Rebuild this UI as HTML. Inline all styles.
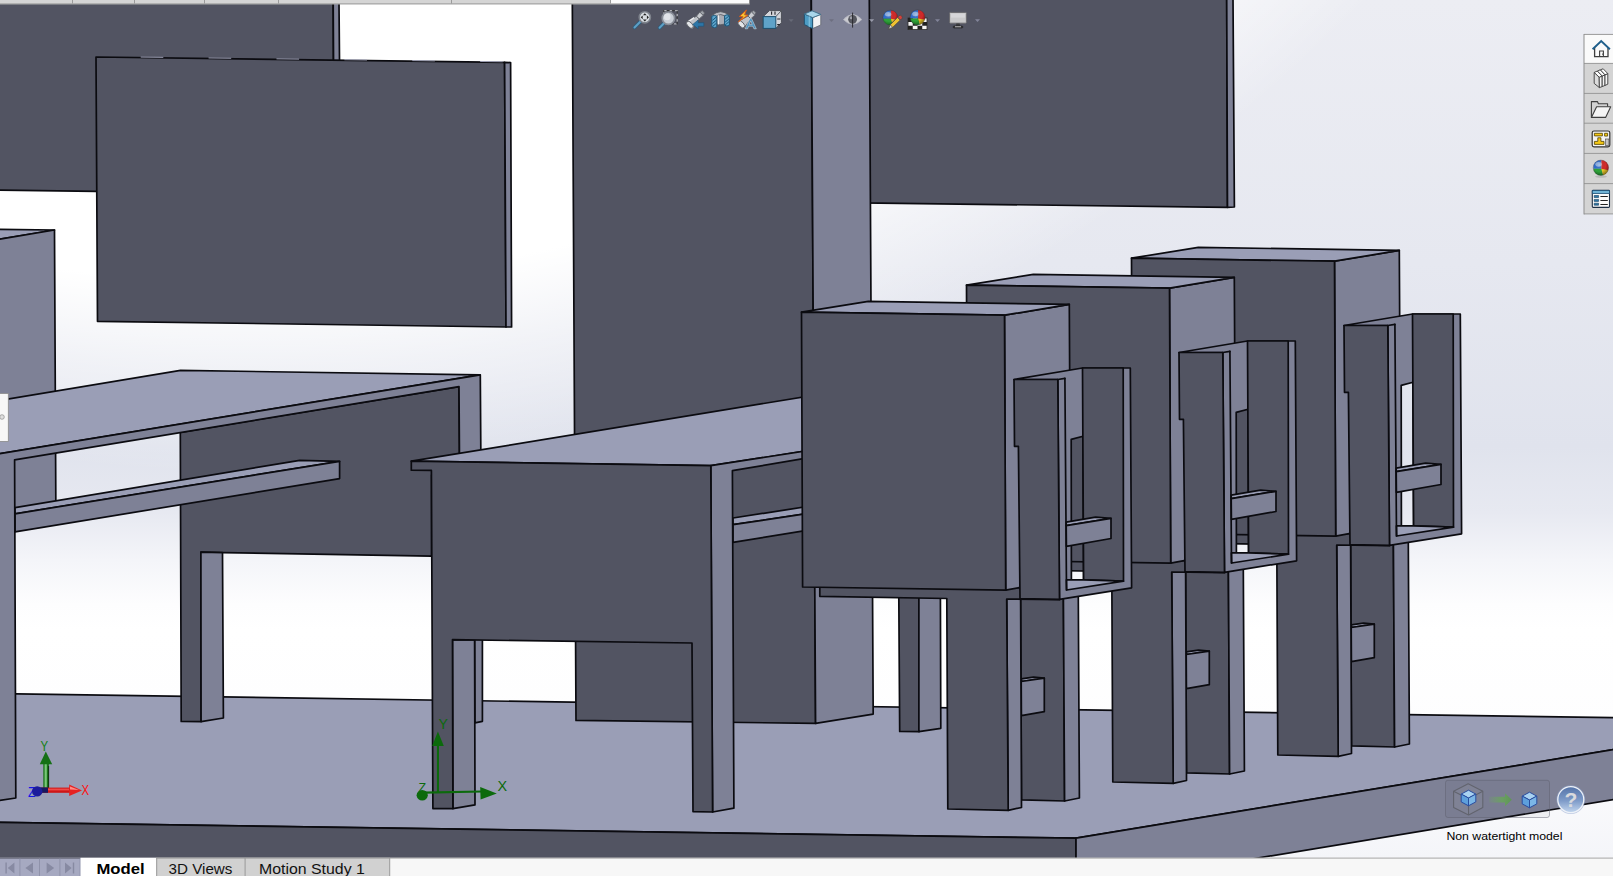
<!DOCTYPE html>
<html lang="en"><head><meta charset="utf-8"><title>Model view</title>
<style>
html,body{margin:0;padding:0;background:#fff;overflow:hidden}
body{width:1613px;height:876px;position:relative;font-family:"Liberation Sans",sans-serif}
svg{position:absolute;left:0;top:0;display:block}
.e{stroke:#0b0b10;stroke-width:1.7;stroke-linejoin:round}
.l{stroke:#0b0b10;stroke-width:1.7;fill:none;stroke-linecap:round}
text{font-family:"Liberation Sans",sans-serif}
</style></head><body>
<svg width="1613" height="876" viewBox="0 0 1613 876">
<defs>
<linearGradient id="bgv" x1="0" y1="0" x2="0" y2="1"><stop offset="0" stop-color="#ecedf3"/><stop offset="0.30" stop-color="#e6e8f0"/><stop offset="0.51" stop-color="#e0e3ed"/><stop offset="0.585" stop-color="#e7e9f1"/><stop offset="0.64" stop-color="#f4f5f9"/><stop offset="0.69" stop-color="#fdfdfe"/><stop offset="0.72" stop-color="#ffffff"/><stop offset="0.86" stop-color="#fdfdfe"/><stop offset="0.98" stop-color="#f4f5f9"/><stop offset="1" stop-color="#f4f5f9"/></linearGradient>
<radialGradient id="bgw" gradientUnits="userSpaceOnUse" cx="250" cy="-1087" r="1564"><stop offset="0" stop-color="#fff" stop-opacity="1"/><stop offset="0.875" stop-color="#fff" stop-opacity="1"/><stop offset="0.931" stop-color="#fff" stop-opacity=".5"/><stop offset="0.998" stop-color="#fff" stop-opacity="0"/><stop offset="1" stop-color="#fff" stop-opacity="0"/></radialGradient>
</defs>
<rect width="1613" height="876" fill="url(#bgv)"/>
<rect width="1613" height="876" fill="url(#bgw)"/>
<g id="scene">
<polygon class="e" points="-2.0,3.0 333.2,3.0 334.0,196.0 96.0,191.3 -2.0,190.2" fill="#525462"/>
<polygon class="e" points="333.2,3.0 339.0,3.0 339.6,70.0 333.6,70.0" fill="#7e8196"/>
<polygon class="e" points="860.0,-2.0 1226.7,-2.0 1227.5,207.3 860.0,202.9" fill="#525462"/>
<polygon class="e" points="1226.7,-2.0 1233.0,-2.0 1234.4,207.0 1227.5,207.3" fill="#7e8196"/>
<polygon class="e" points="-2.0,693.6 1613.0,717.7 1616.0,717.7 1616.0,749.2 1076.0,838.2 -2.0,822.4" fill="#9a9eb6"/>
<polygon class="e" points="-2.0,822.4 1076.0,838.2 1076.0,860.0 -2.0,860.0" fill="#525462"/>
<polygon class="e" points="1076.0,838.2 1616.0,749.2 1616.0,799.1 1246.0,860.0 1076.0,860.0" fill="#7e8196"/>
<polygon class="e" points="572.3,-2.0 811.3,-2.0 815.6,723.4 576.0,720.4" fill="#525462"/>
<polygon class="e" points="811.3,-2.0 869.3,-2.0 873.2,714.1 815.6,723.4" fill="#7e8196"/>
<polygon class="e" points="-2.0,229.4 54.5,230.0 -2.0,239.4" fill="#9a9eb6"/>
<polygon class="e" points="-2.0,239.4 54.5,230.0 55.9,515.0 -2.0,515.0" fill="#7e8196"/>
<polygon class="e" points="96.0,57.0 504.6,62.3 506.0,327.0 97.5,321.3" fill="#525462"/>
<polygon class="e" points="504.6,62.3 510.6,62.6 511.6,327.0 506.0,327.0" fill="#7e8196"/>
<polyline points="96,56.5 504.6,61.8" fill="none" stroke="#a9acc2" stroke-width="0.9" stroke-dasharray="22.6 45.3" stroke-dashoffset="23.2"/>
<polygon class="e" points="180.3,432.3 459.0,386.6 459.6,475.0 431.6,475.0 431.6,556.2 222.5,552.6 200.9,552.2 201.1,721.6 181.2,721.4" fill="#525462"/>
<polygon class="e" points="200.9,552.2 222.5,552.6 223.4,718.0 201.1,721.6" fill="#7e8196"/>
<polygon class="e" points="15.0,507.6 299.7,460.4 339.6,461.4 15.0,513.8" fill="#9a9eb6"/>
<polygon class="e" points="15.0,513.8 339.6,461.4 339.6,478.6 15.0,531.9" fill="#7e8196"/>
<polygon class="e" points="-2.0,400.8 180.5,370.4 479.8,374.8 -2.0,454.0" fill="#9a9eb6"/>
<polygon class="e" points="-2.0,454.0 480.3,374.8 481.0,476.0 459.6,476.0 459.0,386.6 14.6,459.8 15.8,798.0 -2.0,800.8" fill="#7e8196"/>
<polygon class="e" points="474.6,636.0 482.4,636.0 482.4,721.3 474.9,722.8" fill="#7e8196"/>
<polygon class="e" points="411.3,461.2 830.0,392.6 830.0,447.2 710.8,465.7" fill="#9a9eb6"/>
<polygon class="e" points="733.0,518.0 830.0,503.0 830.0,510.2 733.0,524.7" fill="#9a9eb6"/>
<polygon class="e" points="733.0,524.7 830.0,510.2 830.0,526.6 733.0,542.3" fill="#7e8196"/>
<polygon class="e" points="710.8,465.7 830.0,447.2 830.0,454.2 732.4,470.7 733.9,808.2 712.6,812.0" fill="#7e8196"/>
<polygon class="e" points="452.5,639.7 474.6,640.0 475.0,804.9 452.9,808.6" fill="#7e8196"/>
<polygon class="e" points="411.3,461.2 710.8,465.7 712.6,812.0 693.0,811.6 692.0,643.0 452.5,639.7 452.9,808.6 432.9,808.6 431.4,470.4 411.3,470.2" fill="#525462"/>
<polygon class="e" points="898.8,596.0 918.9,596.0 918.9,731.7 899.7,731.4" fill="#525462"/>
<polygon class="e" points="918.9,596.0 940.4,596.0 940.8,728.3 918.9,731.7" fill="#7e8196"/>
<polygon class="e" points="1350.6,542.0 1393.4,542.0 1394.6,747.0 1351.5,745.8" fill="#525462"/>
<polygon class="e" points="1393.4,544.5 1408.3,541.0 1409.4,744.0 1394.6,747.0" fill="#7e8196"/>
<polygon class="e" points="1351.2,624.9 1363.5,623.1 1374.3,624.1 1351.9,627.5" fill="#9a9eb6"/>
<polygon class="e" points="1351.2,627.5 1374.3,624.1 1374.3,657.7 1351.4,661.7" fill="#7e8196"/>
<polygon class="e" points="1336.7,543.0 1350.6,543.0 1351.5,753.5 1338.2,756.3" fill="#7e8196"/>
<polygon class="e" points="1149.8,532.0 1389.7,534.0 1389.7,545.6 1336.7,545.0 1338.2,756.3 1277.8,755.0 1276.8,544.5 1149.8,542.3" fill="#525462"/>
<polygon class="e" points="1334.5,261.2 1399.3,250.4 1400.8,525.0 1349.1,533.7 1335.7,536.1" fill="#7e8196"/>
<polygon class="e" points="1131.5,258.2 1198.3,247.4 1399.3,250.4 1334.5,261.2" fill="#9a9eb6"/>
<polygon class="e" points="1131.5,258.2 1334.5,261.2 1335.7,536.1 1132.6,533.0" fill="#525462"/>
<path class="e" fill-rule="evenodd" fill="#7e8196" d="M1344.0 325.5 L1412.5 314.0 L1460.3 314.0 L1461.6 533.8 L1389.5 545.3 L1387.8 325.5 Z M1401.2 385.4 L1413.0 382.3 L1413.6 526.0 L1401.4 526.0 Z"/>
<polygon class="e" points="1412.5,314.0 1453.2,314.0 1453.5,527.2 1413.6,525.8" fill="#525462"/>
<polygon class="e" points="1396.4,525.9 1413.6,525.8 1453.5,527.2 1396.6,536.0" fill="#9a9eb6"/>
<polygon class="e" points="1396.2,468.2 1425.6,463.1 1441.0,464.3 1396.2,471.6" fill="#9a9eb6"/>
<polygon class="e" points="1396.2,471.6 1441.0,464.3 1441.0,484.5 1396.4,492.4" fill="#7e8196"/>
<polyline class="l" points="1394.9,324.4 1396.5,536.0"/>
<polyline class="l" points="1387.8,325.5 1394.9,324.4"/>
<polygon class="e" points="1344.0,325.5 1387.8,325.5 1389.5,545.3 1350.0,544.7 1348.4,392.3 1344.5,392.3" fill="#525462"/>
<polygon class="e" points="1185.6,569.0 1228.4,569.0 1229.6,774.0 1186.5,772.8" fill="#525462"/>
<polygon class="e" points="1228.4,571.5 1243.3,568.0 1244.4,771.0 1229.6,774.0" fill="#7e8196"/>
<polygon class="e" points="1186.2,651.9 1198.5,650.1 1209.3,651.1 1186.9,654.5" fill="#9a9eb6"/>
<polygon class="e" points="1186.2,654.5 1209.3,651.1 1209.3,684.7 1186.4,688.7" fill="#7e8196"/>
<polygon class="e" points="1171.7,570.0 1185.6,570.0 1186.5,780.5 1173.2,783.3" fill="#7e8196"/>
<polygon class="e" points="984.8,559.0 1224.7,561.0 1224.7,572.6 1171.7,572.0 1173.2,783.3 1112.8,782.0 1111.8,571.5 984.8,569.3" fill="#525462"/>
<polygon class="e" points="1169.5,288.2 1234.3,277.4 1235.8,552.0 1184.1,560.7 1170.7,563.1" fill="#7e8196"/>
<polygon class="e" points="966.5,285.2 1033.3,274.4 1234.3,277.4 1169.5,288.2" fill="#9a9eb6"/>
<polygon class="e" points="966.5,285.2 1169.5,288.2 1170.7,563.1 967.6,560.0" fill="#525462"/>
<path class="e" fill-rule="evenodd" fill="#7e8196" d="M1179.0 352.5 L1247.5 341.0 L1295.3 341.0 L1296.6 560.8 L1224.5 572.3 L1222.8 352.5 Z M1236.2 412.4 L1248.0 409.3 L1248.6 553.0 L1236.4 553.0 Z"/>
<polygon class="e" points="1247.5,341.0 1288.2,341.0 1288.5,554.2 1248.6,552.8" fill="#525462"/>
<polygon class="e" points="1231.4,552.9 1248.6,552.8 1288.5,554.2 1231.6,563.0" fill="#9a9eb6"/>
<polygon class="e" points="1231.2,495.2 1260.6,490.1 1276.0,491.3 1231.2,498.6" fill="#9a9eb6"/>
<polygon class="e" points="1231.2,498.6 1276.0,491.3 1276.0,511.5 1231.4,519.4" fill="#7e8196"/>
<polyline class="l" points="1229.9,351.4 1231.5,563.0"/>
<polyline class="l" points="1222.8,352.5 1229.9,351.4"/>
<polygon class="e" points="1179.0,352.5 1222.8,352.5 1224.5,572.3 1185.0,571.7 1183.4,419.3 1179.5,419.3" fill="#525462"/>
<polygon class="e" points="1020.6,596.0 1063.4,596.0 1064.6,801.0 1021.5,799.8" fill="#525462"/>
<polygon class="e" points="1063.4,598.5 1078.3,595.0 1079.4,798.0 1064.6,801.0" fill="#7e8196"/>
<polygon class="e" points="1021.2,678.9 1033.5,677.1 1044.3,678.1 1021.9,681.5" fill="#9a9eb6"/>
<polygon class="e" points="1021.2,681.5 1044.3,678.1 1044.3,711.7 1021.4,715.7" fill="#7e8196"/>
<polygon class="e" points="1006.7,597.0 1020.6,597.0 1021.5,807.5 1008.2,810.3" fill="#7e8196"/>
<polygon class="e" points="819.8,586.0 1059.7,588.0 1059.7,599.6 1006.7,599.0 1008.2,810.3 947.8,809.0 946.8,598.5 819.8,596.3" fill="#525462"/>
<polygon class="e" points="1004.5,315.2 1069.3,304.4 1070.8,579.0 1019.1,587.7 1005.7,590.1" fill="#7e8196"/>
<polygon class="e" points="801.5,312.2 868.3,301.4 1069.3,304.4 1004.5,315.2" fill="#9a9eb6"/>
<polygon class="e" points="801.5,312.2 1004.5,315.2 1005.7,590.1 802.6,587.0" fill="#525462"/>
<path class="e" fill-rule="evenodd" fill="#7e8196" d="M1014.0 379.5 L1082.5 368.0 L1130.3 368.0 L1131.6 587.8 L1059.5 599.3 L1057.8 379.5 Z M1071.2 439.4 L1083.0 436.3 L1083.6 580.0 L1071.4 580.0 Z"/>
<polygon class="e" points="1082.5,368.0 1123.2,368.0 1123.5,581.2 1083.6,579.8" fill="#525462"/>
<polygon class="e" points="1066.4,579.9 1083.6,579.8 1123.5,581.2 1066.6,590.0" fill="#9a9eb6"/>
<polygon class="e" points="1066.2,522.2 1095.6,517.1 1111.0,518.3 1066.2,525.6" fill="#9a9eb6"/>
<polygon class="e" points="1066.2,525.6 1111.0,518.3 1111.0,538.5 1066.4,546.4" fill="#7e8196"/>
<polyline class="l" points="1064.9,378.4 1066.5,590.0"/>
<polyline class="l" points="1057.8,379.5 1064.9,378.4"/>
<polygon class="e" points="1014.0,379.5 1057.8,379.5 1059.5,599.3 1020.0,598.7 1018.4,446.3 1014.5,446.3" fill="#525462"/>
</g>
<g id="topstrip">
<rect x="0" y="0" width="610" height="4.2" fill="#d5d5d5"/>
<rect x="610" y="0" width="139.5" height="4.2" fill="#fbfbfb"/>
<rect x="0" y="3.4" width="749.5" height="1" fill="#9b9b9b"/>
<rect x="72" y="0" width="1" height="3.6" fill="#9c9c9c"/>
<rect x="134" y="0" width="1" height="3.6" fill="#9c9c9c"/>
<rect x="204" y="0" width="1" height="3.6" fill="#9c9c9c"/>
<rect x="278" y="0" width="1" height="3.6" fill="#9c9c9c"/>
<rect x="451" y="0" width="1" height="3.6" fill="#9c9c9c"/>
<rect x="610" y="0" width="1" height="3.6" fill="#9c9c9c"/>
<rect x="749" y="0" width="1" height="4.4" fill="#8c8c8c"/>
</g>
<radialGradient id="gsph" cx=".4" cy=".32" r=".75"><stop offset="0" stop-color="#fff" stop-opacity=".25"/><stop offset=".55" stop-color="#000" stop-opacity="0"/><stop offset="1" stop-color="#000" stop-opacity=".5"/></radialGradient>
<g id="hud">
<g><line x1="640.5" y1="21.5" x2="634.5" y2="27.5" stroke="#2f5d7c" stroke-width="3.6" stroke-linecap="round"/><line x1="640.5" y1="21.5" x2="634.5" y2="27.5" stroke="#5ea0c6" stroke-width="2" stroke-linecap="round"/><circle cx="644.8" cy="17.3" r="5.6" fill="#d9dde2" stroke="#7e838c" stroke-width="1.6"/><path d="M644.8 13.2l1.9 2h-3.8z M644.8 21.4l1.9-2h-3.8z M640.7 17.3l2-1.9v3.8z M648.9 17.3l-2-1.9v3.8z" fill="#222"/></g>
<g><rect x="663.8" y="10.6" width="13.4" height="13.2" fill="none" stroke="#c9cad0" stroke-width="1.2" stroke-dasharray="3.2 2.2" opacity=".8"/><rect x="663.8" y="10.6" width="13.4" height="13.2" fill="none" stroke="#2a2a2a" stroke-width="1.1" stroke-dasharray="3.2 2.2" stroke-dashoffset="2.7" opacity=".75"/><line x1="664.5" y1="22.8" x2="659.6" y2="27.8" stroke="#2f5d7c" stroke-width="3.6" stroke-linecap="round"/><line x1="664.5" y1="22.8" x2="659.6" y2="27.8" stroke="#5ea0c6" stroke-width="2" stroke-linecap="round"/><circle cx="668.4" cy="18.2" r="6.2" fill="#c9ced6" stroke="#878c96" stroke-width="1.6"/><circle cx="667.3" cy="16.9" r="3.3" fill="#e6e9ee" opacity=".8"/></g>
<g stroke-linejoin="round"><path d="M699.6 12.2 L702.4 10.6 L704.6 13 L703 15.6 Z" fill="#9fa3aa" stroke="#5f626a" stroke-width=".8"/><path d="M696.4 16.2 L699.8 12 L703.2 15.4 L699.2 19 Z" fill="#c9ccd1" stroke="#5f626a" stroke-width=".9"/><path d="M696.4 16.2 L687 21.6 L692.8 28 L699.2 19 Z" fill="#bfc2c8" stroke="#5f626a" stroke-width=".9"/><path d="M694.2 17.6 L688.2 21.6" stroke="#eceef0" stroke-width="1.3"/><ellipse cx="689.9" cy="24.8" rx="4.3" ry="2.3" transform="rotate(47 689.9 24.8)" fill="#e4e6e9" stroke="#5f626a" stroke-width=".9"/><path d="M692.8 24.4 L698.2 20 L698.2 22.7 L703.8 22.7 L703.8 26.2 L698.2 26.2 L698.2 28.9 Z" fill="#2d76a8" stroke="#1c5377" stroke-width=".6"/></g>
<g><path d="M711.8 15.6 Q720.6 7.8 729.4 15.6 L729.4 17 L724.6 17 Q720.6 13.6 716.8 17 L711.8 17 Z" fill="#b9bcc3" stroke="#55585f" stroke-width=".9"/><path d="M716.8 15.8 Q720.6 13.2 724.6 15.8 L724.6 24 Q720.6 25.6 716.8 24 Z" fill="#a9acb4" stroke="#55585f" stroke-width=".8"/><path d="M718.4 15.2 L718.4 24.4" stroke="#ececee" stroke-width="1.4"/><path d="M711.8 16.2 Q714.3 14.6 716.8 16.2 L716.8 26.8 Q714.3 28.8 711.8 26.6 Z" fill="#5ea6cd" stroke="#1c587c" stroke-width="1"/><path d="M724.6 15.6 Q727 14 729.4 15.6 L729.4 25 Q727 27 724.6 25.2 Z" fill="#5ea6cd" stroke="#1c587c" stroke-width="1"/><path d="M712.4 20.4l3.9-3.4M712.4 23.6l3.9-3.4M712.6 26.6l3.8-3.4M725.1 19.2l3.8-3.2M725.1 22.2l3.8-3.2M725.1 25l3.8-3.2" stroke="#1c587c" stroke-width="1"/></g>
<g stroke-linejoin="round"><path d="M751.2 12 L753.8 10.4 L756 12.8 L754.4 15.2 Z" fill="#9fa3aa" stroke="#5f626a" stroke-width=".8"/><path d="M748 16 L751.4 11.8 L754.8 15.2 L750.8 18.8 Z" fill="#c9ccd1" stroke="#5f626a" stroke-width=".9"/><path d="M748 16 L738.6 21.2 L744.2 27.6 L750.8 18.8 Z" fill="#bfc2c8" stroke="#5f626a" stroke-width=".9"/><ellipse cx="741.4" cy="24.4" rx="4.2" ry="2.3" transform="rotate(47 741.4 24.4)" fill="#e4e6e9" stroke="#5f626a" stroke-width=".9"/><path d="M746.4 10 L739.4 16.4 L743 16.8 L738.2 21.8 L748 15.2 L744.6 14.8 Z" fill="#f7c531" stroke="#d2571c" stroke-width="1"/><path d="M745.2 28.8 L749.9 18.6 L751.6 18.6 L756.3 28.8 L753.9 28.8 L752.9 26.2 L748.6 26.2 L747.6 28.8 Z M749.3 24.4 L752.2 24.4 L750.75 20.8 Z" fill="#4a90bd" stroke="#dfe6ec" stroke-width=".5" fill-rule="evenodd"/></g>
<g><path d="M763.2 16.6 L769.4 10.6 L781.4 10.6 L781.4 22.8 L775.8 28.4 L763.2 28.4 Z" fill="#d3d5da" stroke="#4c4f57" stroke-width="1"/><path d="M775.8 16.6 L781.4 10.6" stroke="#4c4f57" stroke-width=".9" fill="none"/><path d="M771.6 11.4v3.4M775 11.4v3.4M777.2 19h3.2M777.2 24.6h2.6" stroke="#25272c" stroke-width="1.1"/><rect x="763.2" y="16.6" width="12.6" height="11.8" fill="#5fa3c9" stroke="#1d506f" stroke-width="1"/></g>
<path d="M788.6 19.3h5l-2.5 2.8z" fill="#676a77"/>
<g stroke-linejoin="round"><path d="M812.6 17.6 L820.8 14.4 L820.8 25 L812.6 28.6 Z" fill="#f2f3f5" stroke="#6a6d76" stroke-width=".9"/><path d="M804.4 14 L812.6 17.6 L812.6 28.6 L804.4 24.6 Z" fill="#4d9cc4" stroke="#1d506f" stroke-width=".9"/><path d="M804.4 14 L812 10.8 L820.8 14.4 L812.6 17.6 Z" fill="#a9d6ea" stroke="#3d6f8c" stroke-width=".9"/><path d="M809.4 16.4 L809.4 27" stroke="#8fc9e4" stroke-width="1.6" opacity=".7"/></g>
<path d="M829 19.3h5l-2.5 2.8z" fill="#5f6170" opacity=".55"/>
<g><path d="M843.4 19.6 Q852.6 9.6 861.8 19.6 Q852.6 29 843.4 19.6 Z" fill="#c9cad0" stroke="#b1b3be" stroke-width=".8"/><circle cx="852.6" cy="19.3" r="4.4" fill="#55575f"/><circle cx="851.2" cy="17.8" r="1.5" fill="#9b9da6"/><line x1="852.6" y1="12.6" x2="852.6" y2="27.6" stroke="#2a2b30" stroke-width="1"/></g>
<path d="M869.2 19.3h5l-2.5 2.8z" fill="#9a9cab"/>
<g><clipPath id="cb1"><circle cx="890.4" cy="17.7" r="7.5"/></clipPath><g clip-path="url(#cb1)"><rect x="882.9" y="10.2" width="8.0" height="8.5" fill="#2f6fd2"/><rect x="890.9" y="10.2" width="7.5" height="9.9" fill="#d42a2a"/><path d="M882.9 18.7 L890.9 18.7 L893.0 26.2 L882.9 26.2 Z" fill="#2fa53a"/><path d="M890.9 18.7 L897.9 20.099999999999998 L897.9 26.2 L893.0 26.2 Z" fill="#e8c528"/><ellipse cx="888.15" cy="14.325" rx="3.15" ry="2.25" fill="#fff" opacity=".45"/><circle cx="890.4" cy="17.7" r="7.5" fill="url(#gsph)"/></g><circle cx="890.4" cy="17.7" r="7.5" fill="none" stroke="#30303a" stroke-opacity=".4" stroke-width=".8"/></g>
<g><path d="M888.4 29.2 L890.2 24.8 L897.6 17.2 L900.4 20 L892.8 27.4 Z" fill="#efc230" stroke="#4a4a4a" stroke-width=".9"/><path d="M897.6 17.2 L899.2 15.6 Q900.6 14.8 901.8 16 Q902.8 17.2 902 18.4 L900.4 20 Z" fill="#d8403a" stroke="#4a4a4a" stroke-width=".8"/><path d="M888.4 29.2 L890.2 24.8 L892.8 27.4 Z" fill="#d9d6cf" stroke="#4a4a4a" stroke-width=".8"/></g>
<g><rect x="908" y="18" width="19" height="11.6" fill="#f4f4f4" stroke="#2b2b2b" stroke-width=".8"/><path d="M908 18h4.75v3.9h-4.75z M917.5 18h4.75v3.9h-4.75z M912.75 21.9h4.75v3.9h-4.75z M922.25 21.9h4.75v3.9h-4.75z M908 25.8h4.75v3.8h-4.75z M917.5 25.8h4.75v3.8h-4.75z" fill="#222"/></g>
<g><clipPath id="cb2"><circle cx="917.6" cy="17.4" r="7.5"/></clipPath><g clip-path="url(#cb2)"><rect x="910.1" y="9.899999999999999" width="8.0" height="8.5" fill="#2f6fd2"/><rect x="918.1" y="9.899999999999999" width="7.5" height="9.9" fill="#d42a2a"/><path d="M910.1 18.4 L918.1 18.4 L920.2 25.9 L910.1 25.9 Z" fill="#2fa53a"/><path d="M918.1 18.4 L925.1 19.799999999999997 L925.1 25.9 L920.2 25.9 Z" fill="#e8c528"/><ellipse cx="915.35" cy="14.024999999999999" rx="3.15" ry="2.25" fill="#fff" opacity=".45"/><circle cx="917.6" cy="17.4" r="7.5" fill="url(#gsph)"/></g><circle cx="917.6" cy="17.4" r="7.5" fill="none" stroke="#30303a" stroke-opacity=".4" stroke-width=".8"/></g>
<path d="M935 19.3h5l-2.5 2.8z" fill="#83859a"/>
<g><rect x="949.6" y="12.4" width="16.8" height="10.8" rx=".8" fill="#c9c9cb" stroke="#6a6a6e" stroke-width="1"/><rect x="951" y="13.6" width="14" height="4" fill="#dcdcde" opacity=".7"/><path d="M956.4 23.4h3.2l.6 2.6h-4.4z" fill="#3a3a3c"/><rect x="953.2" y="26" width="9.6" height="2" rx=".9" fill="#3a3a3c" stroke="#1c1c1e" stroke-width=".6"/><rect x="955" y="26.4" width="6" height=".8" fill="#d8d8da"/></g>
<path d="M975 19.3h5l-2.5 2.8z" fill="#83859a"/>
</g>
<g id="tabs">
<rect x="1584" y="34.4" width="30" height="179.6" fill="#d4d4d4"/>
<rect x="1584" y="34.4" width="30" height="29" fill="#fafafa"/>
<rect x="1584" y="33.9" width="30" height="1" fill="#9a9a9a"/>
<rect x="1584" y="62.9" width="30" height="1" fill="#9a9a9a"/>
<rect x="1584" y="92.9" width="30" height="1" fill="#9a9a9a"/>
<rect x="1584" y="122.7" width="30" height="1" fill="#9a9a9a"/>
<rect x="1584" y="152.9" width="30" height="1" fill="#9a9a9a"/>
<rect x="1584" y="183.1" width="30" height="1" fill="#9a9a9a"/>
<rect x="1584" y="213.4" width="30" height="1" fill="#9a9a9a"/>
<rect x="1583.5" y="34" width="1" height="180.4" fill="#8e8e8e"/>
<g fill="none"><path d="M1594.6 47.6 V56.6 H1608 V47.6" stroke="#3f3f3f" stroke-width="1.3"/><path d="M1599.6 56.4 V51 H1603.4 V56.4" stroke="#3f3f3f" stroke-width="1.1"/><rect x="1602" y="53.6" width="1" height="1" fill="#3f3f3f"/><path d="M1592.6 49.2 L1601.2 41 L1609.9 49.2" stroke="#1f5f8b" stroke-width="1.9" stroke-linejoin="miter"/></g>
<g stroke="#3c3c3c" stroke-width=".9" stroke-linejoin="round"><path d="M1594.2 72.4 L1599.2 77.2 L1599.4 87.6 L1594.2 83.4 Z" fill="#dcdcdc"/><path d="M1599.2 77.2 L1602.2 76 L1602.2 86.6 L1599.4 87.6 Z" fill="#f4f4f4"/><path d="M1602.2 76 L1605 74.8 L1605 85.4 L1602.2 86.6 Z" fill="#f4f4f4"/><path d="M1605 74.8 L1607.8 73.6 L1607.8 84.2 L1605 85.4 Z" fill="#f4f4f4"/><path d="M1594.2 72.4 L1597.4 71 L1602.2 76 L1599.2 77.2 Z" fill="#fdfdfd"/><path d="M1597.4 71 L1600.4 69.8 L1605 74.8 L1602.2 76 Z" fill="#fdfdfd"/><path d="M1600.4 69.8 L1603.2 68.8 L1607.8 73.6 L1605 74.8 Z" fill="#fdfdfd"/></g>
<g stroke="#3e3e3e" stroke-width="1.1" stroke-linejoin="round"><path d="M1591.4 117.4 V101.6 H1597.4 L1598.4 103.8 H1607.6 V106.8" fill="#d2d2d2"/><path d="M1591.4 117.4 L1596.6 106.8 H1610.7 L1605.6 117.4 Z" fill="#f4f4f4"/></g>
<g><rect x="1592.2" y="131" width="17.6" height="15.8" rx="1.8" fill="#f3f3f3" stroke="#333" stroke-width="1.2"/><path d="M1594.4 133.3h8v2.6h-8z M1604.6 133.3h3v2.8h-3z M1597.8 137.8h3.1v3.6h3.1v3h-9.6v-3h3.4z" fill="#f5c814" stroke="#4f4100" stroke-width=".8" stroke-linejoin="round"/><rect x="1605.6" y="139" width="3.3" height="6.6" fill="#c4c4c4" stroke="#555" stroke-width=".7"/></g>
<g><clipPath id="cb3"><circle cx="1600.9" cy="167.8" r="7.7"/></clipPath><g clip-path="url(#cb3)"><rect x="1593.2" y="160.10000000000002" width="8.2" height="8.7" fill="#2f6fd2"/><rect x="1601.4" y="160.10000000000002" width="7.7" height="10.1" fill="#d42a2a"/><path d="M1593.2 168.8 L1601.4 168.8 L1603.5 176.5 L1593.2 176.5 Z" fill="#2fa53a"/><path d="M1601.4 168.8 L1608.6000000000001 170.20000000000002 L1608.6000000000001 176.5 L1603.5 176.5 Z" fill="#e8c528"/><ellipse cx="1598.5900000000001" cy="164.335" rx="3.234" ry="2.31" fill="#fff" opacity=".45"/><circle cx="1600.9" cy="167.8" r="7.7" fill="url(#gsph)"/></g><circle cx="1600.9" cy="167.8" r="7.7" fill="none" stroke="#30303a" stroke-opacity=".4" stroke-width=".8"/></g>
<ellipse cx="1601" cy="176.6" rx="6" ry="1.2" fill="#000" opacity=".12"/>
<g><rect x="1592.3" y="190.4" width="17.2" height="17" rx=".8" fill="#fbfbfb" stroke="#1d2f45" stroke-width="1.1"/><rect x="1592.3" y="190.4" width="17.2" height="3.2" fill="#6fb3d6" stroke="#1f4f75" stroke-width=".8"/><path d="M1594.2 195.5h4.4v2h-4.4z M1594.2 199.4h4.4v2h-4.4z M1594.2 203.2h4.4v2h-4.4z" fill="#2f78a8" stroke="#163f60" stroke-width=".6"/><path d="M1600.4 196.5h7.4M1600.4 200.5h7.4M1600.4 204.5h7.4" stroke="#222" stroke-width="1.1"/></g>
</g>
<g><rect x="-1" y="393.5" width="9.3" height="47.9" fill="#f7f7f7" stroke="#8b8b8b" stroke-width=".8"/><circle cx="2" cy="417" r="2.3" fill="#dedede" stroke="#8d8d8d" stroke-width=".7"/></g>
<g id="triad">
<text x="28" y="797.2" font-size="14" fill="#1414e6" textLength="7.4" lengthAdjust="spacingAndGlyphs">Z</text>
<rect x="43.3" y="763" width="5.6" height="27.6" fill="#1b741b"/><rect x="44.6" y="763" width="2.2" height="26" fill="#79c779"/><rect x="48.2" y="766" width=".9" height="23" fill="#0d2d0d"/>
<path d="M45.8 751.6 L52.2 764.2 L39.8 764.2 Z" fill="#157015"/>
<rect x="41" y="787.6" width="29" height="5.2" fill="#cf1616"/><rect x="47" y="788.6" width="22" height="1.8" fill="#f04a4a"/><rect x="38" y="787.4" width="10" height="5.4" fill="#17175f"/>
<path d="M82 790.4 L69.2 784.6 L69.2 796 Z" fill="#e62222"/><path d="M79 790 L70 786.6 L70 789.6 Z" fill="#ff8d86"/>
<circle cx="37.2" cy="791.4" r="5.2" fill="#1b1b9b"/>
<text x="40.6" y="750.8" font-size="14" fill="#128012" textLength="7.6" lengthAdjust="spacingAndGlyphs">Y</text>
<text x="81.6" y="795.4" font-size="14.5" fill="#ff1010" textLength="7.6" lengthAdjust="spacingAndGlyphs">X</text>
</g>
<g id="origin" fill="#0c6a0c" stroke="none">
<rect x="436.9" y="744" width="2.1" height="49"/>
<path d="M437.9 731.6 L443.8 746 L432.2 746 Z"/>
<rect x="424" y="791.6" width="58" height="2.1" transform="rotate(-1.2 424 792.6)"/>
<path d="M496.8 793.4 L480.2 787 L480.6 799.4 Z"/>
<ellipse cx="422.2" cy="795.2" rx="5.6" ry="5.2"/>
<text x="438.6" y="728.6" font-size="15" textLength="9.4" lengthAdjust="spacingAndGlyphs">Y</text>
<text x="497.6" y="791.4" font-size="15" textLength="9.6" lengthAdjust="spacingAndGlyphs">X</text>
<text x="418.6" y="792.4" font-size="13.5" textLength="7.6" lengthAdjust="spacingAndGlyphs">Z</text>
</g>
<g id="wt">
<rect x="1445.5" y="780.3" width="104" height="37.2" rx="2.4" fill="#3a3c48" fill-opacity=".05" stroke="#5c5e6a" stroke-opacity=".45" stroke-width="1"/>
<g stroke="#62646e" stroke-width="1.1" stroke-linejoin="round"><path d="M1468.2 783.8 L1482.8 791.2 L1482.8 807.4 L1468.6 815 L1453.6 807.4 L1453.6 791.2 Z" fill="#8a8c9a" fill-opacity=".35"/><path d="M1453.6 791.2 L1468.4 798.8 L1482.8 791.2 M1468.4 798.8 L1468.6 815" fill="none"/></g>
<g stroke="#2a4d9f" stroke-width="1" stroke-linejoin="round"><path d="M1468.5 790.2 L1475.8 794.1 L1468.5 798.0 L1461.2 794.1 Z" fill="#a9d2f1"/><path d="M1461.2 794.1 L1468.5 798.0 L1468.5 805.8 L1461.2 801.9 Z" fill="#5d9fdc"/><path d="M1468.5 798.0 L1475.8 794.1 L1475.8 801.9 L1468.5 805.8 Z" fill="#7bb6e6"/></g>
<linearGradient id="ga" x1="0" y1="0" x2="1" y2="0"><stop offset="0" stop-color="#6fa266" stop-opacity=".15"/><stop offset=".6" stop-color="#6a9f61"/><stop offset="1" stop-color="#5f9657"/></linearGradient>
<path d="M1489 796.8 H1505 V793.2 L1511.8 799.7 L1505 806.2 V802.6 H1489 Z" fill="url(#ga)"/>
<g stroke="#2a4d9f" stroke-width="1" stroke-linejoin="round"><path d="M1529.5 792.2 L1536.8 796.1 L1529.5 800.0 L1522.2 796.1 Z" fill="#a9d2f1"/><path d="M1522.2 796.1 L1529.5 800.0 L1529.5 807.8 L1522.2 803.9 Z" fill="#5d9fdc"/><path d="M1529.5 800.0 L1536.8 796.1 L1536.8 803.9 L1529.5 807.8 Z" fill="#7bb6e6"/></g>
<linearGradient id="gq" x1="0" y1="0" x2="0" y2="1"><stop offset="0" stop-color="#5473a8"/><stop offset=".55" stop-color="#7f9cc9"/><stop offset="1" stop-color="#c3d6ee"/></linearGradient>
<circle cx="1570.8" cy="799.6" r="14.4" fill="#8fa6cf" fill-opacity=".55"/><circle cx="1570.8" cy="799.6" r="13" fill="url(#gq)" stroke="#eef2f8" stroke-width="1.3"/>
<text x="1570.8" y="807.4" font-size="21" font-weight="bold" fill="#d9dadd" text-anchor="middle">?</text>
<text x="1446.4" y="839.7" font-size="10.6" fill="#000" textLength="116" lengthAdjust="spacingAndGlyphs">Non watertight model</text>
</g>
<g id="bottom">
<rect x="0" y="857.8" width="1613" height="18.4" fill="#f7f7f7"/>
<rect x="389.5" y="857.6" width="1224" height="1" fill="#a6a6a6"/>
<rect x="0" y="857.8" width="80.6" height="18.4" fill="#a6a9c1"/>
<rect x="0" y="857.6" width="80.6" height="1" fill="#5d5f6e"/>
<rect x="19.4" y="858.6" width="1" height="17.6" fill="#8f92aa"/>
<rect x="39.0" y="858.6" width="1" height="17.6" fill="#8f92aa"/>
<rect x="59.4" y="858.6" width="1" height="17.6" fill="#8f92aa"/>
<rect x="79.6" y="858.6" width="1" height="17.6" fill="#8f92aa"/>
<path d="M5.4 862.6h1.4v11h-1.4z M14.4 862.6v11l-6.6-5.5z" fill="#878aa2"/>
<path d="M33 862.6v11l-7.6-5.5z" fill="#878aa2"/>
<path d="M46.6 862.6v11l7.6-5.5z" fill="#878aa2"/>
<path d="M65 862.6v11l6.6-5.5z M72.8 862.6h1.4v11h-1.4z" fill="#878aa2"/>
<rect x="80.6" y="857.8" width="75.8" height="18.4" fill="#ffffff"/>
<rect x="156.4" y="857.8" width="233.2" height="18.4" fill="#d1d1d1"/>
<rect x="156.4" y="857.6" width="233.2" height="1" fill="#9b9b9b"/>
<rect x="156.2" y="857.8" width="1" height="18.4" fill="#9a9a9a"/>
<rect x="244.6" y="857.8" width="1" height="18.4" fill="#9a9a9a"/>
<rect x="389.2" y="857.8" width="1" height="18.4" fill="#9a9a9a"/>
<text x="96.4" y="873.8" font-size="15.5" font-weight="bold" fill="#000" textLength="48.2" lengthAdjust="spacingAndGlyphs">Model</text>
<text x="168.6" y="873.8" font-size="15" fill="#111" textLength="63.8" lengthAdjust="spacingAndGlyphs">3D Views</text>
<text x="259" y="873.8" font-size="15" fill="#111" textLength="105.8" lengthAdjust="spacingAndGlyphs">Motion Study 1</text>
</g>
</svg>
</body></html>
